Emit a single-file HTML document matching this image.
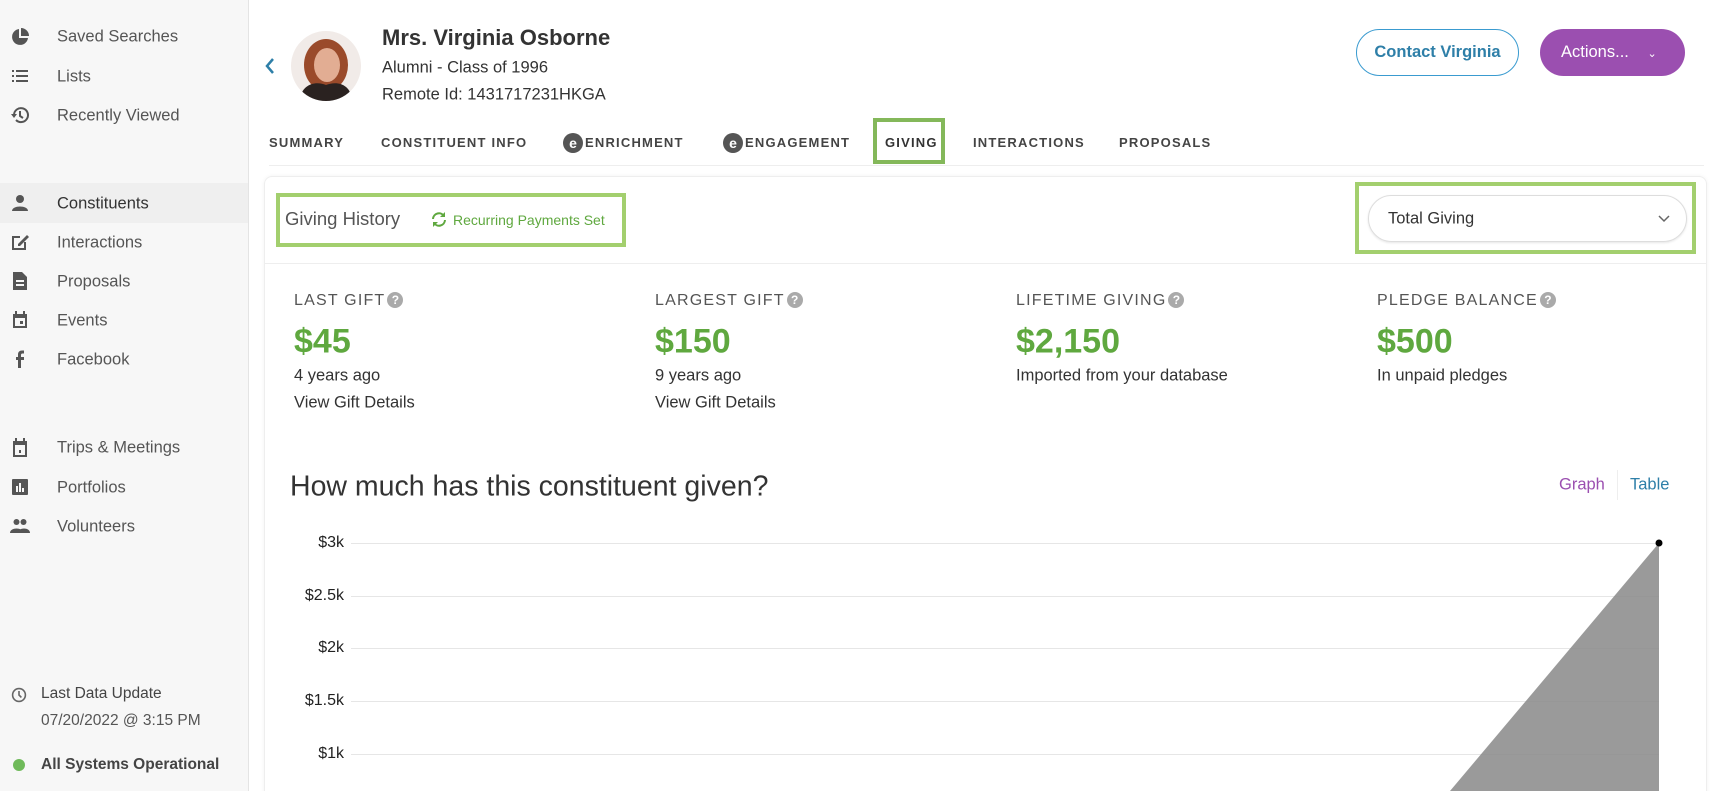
<!DOCTYPE html>
<html style="overflow:hidden;width:1720px;height:791px"><head><meta charset="utf-8"><style>
*{box-sizing:border-box;margin:0;padding:0}
body{width:1720px;height:791px;overflow:hidden;background:#fff;font-family:"Liberation Sans",sans-serif;color:#333;position:relative}
.a{position:absolute;white-space:nowrap}
.side{position:absolute;left:0;top:0;width:249px;height:791px;background:#f7f7f7;border-right:1px solid #e4e4e4}
.si{position:absolute;left:57px;font-size:16.5px;color:#555;transform:translateY(-50%)}
.ic{position:absolute;left:10px;width:20px;height:20px;transform:translateY(-50%);fill:#555}
.tab{position:absolute;top:143px;transform:translateY(-50%);font-size:13px;font-weight:bold;letter-spacing:1.2px;color:#444;display:flex;align-items:center;line-height:20px}
.e{display:inline-block;width:20px;height:20px;border-radius:50%;background:#555;color:#fff;font-size:14px;text-align:center;line-height:20px;margin-right:2px;letter-spacing:0}
.lbl{position:absolute;top:301px;transform:translateY(-50%);font-size:16px;letter-spacing:1.2px;color:#555}
.q{display:inline-block;width:16px;height:16px;border-radius:50%;background:#aaa;color:#fff;font-size:12px;text-align:center;line-height:16px;font-weight:bold;letter-spacing:0;vertical-align:1px;margin-left:2px}
.amt{position:absolute;top:342px;transform:translateY(-50%);font-size:34px;font-weight:bold;color:#5fa83f}
.sub{position:absolute;transform:translateY(-50%);font-size:16.5px;color:#333}
.gl{position:absolute;left:351px;width:1308px;height:1px;background:#e6e6e6}
.yl{position:absolute;right:1376px;font-size:16px;color:#222;transform:translateY(-50%)}
</style></head><body>
<div class="side">
<div style="position:absolute;left:0;top:183px;width:248px;height:40px;background:#efefef"></div>
<svg class="ic" style="top:37px" viewBox="0 0 20 20"><path d="M9 2A8 8 0 1 0 18 11H9Z"/><path d="M11 1V9H19A8 8 0 0 0 11 1Z"/></svg>
<svg class="ic" style="top:76px" viewBox="0 0 20 20"><rect x="2" y="4" width="2" height="2"/><rect x="2" y="9" width="2" height="2"/><rect x="2" y="14" width="2" height="2"/><rect x="6" y="4" width="12" height="2"/><rect x="6" y="9" width="12" height="2"/><rect x="6" y="14" width="12" height="2"/></svg>
<svg class="ic" style="top:115px" viewBox="0 0 20 20"><path d="M4 10A7 7 0 1 1 6 15" fill="none" stroke="#555" stroke-width="2"/><path d="M1 9L4 13L7 9Z"/><path d="M10 6V11L13 13" fill="none" stroke="#555" stroke-width="2"/></svg>
<div class="si" style="top:37px">Saved Searches</div>
<div class="si" style="top:77px">Lists</div>
<div class="si" style="top:116px">Recently Viewed</div>
<svg class="ic" style="top:203px" viewBox="0 0 20 20"><circle cx="10" cy="6" r="4"/><path d="M2 18C2 12 18 12 18 18Z"/></svg>
<svg class="ic" style="top:242px" viewBox="0 0 20 20"><path d="M2 4H10V6H4V16H14V10H16V18H2Z"/><path d="M8 12L17 3L19 5L10 14H8Z"/></svg>
<svg class="ic" style="top:281px" viewBox="0 0 20 20"><path d="M3 1H12L17 6V19H3Z"/><rect x="6" y="9" width="8" height="2" fill="#f7f7f7"/><rect x="6" y="13" width="8" height="2" fill="#f7f7f7"/></svg>
<svg class="ic" style="top:320px" viewBox="0 0 20 20"><path d="M3 4H17V18H3Z"/><rect x="5" y="8" width="10" height="8" fill="#f7f7f7"/><rect x="10" y="11" width="3" height="3"/><rect x="5" y="1" width="2" height="4"/><rect x="13" y="1" width="2" height="4"/></svg>
<svg class="ic" style="top:359px" viewBox="0 0 20 20"><path d="M11 19V11H14V8H11V6C11 5 11.5 4.5 12.5 4.5H14V1.5H12C9.5 1.5 8 3 8 5.5V8H6V11H8V19Z"/></svg>
<div class="si" style="top:204px;color:#333">Constituents</div>
<div class="si" style="top:243px">Interactions</div>
<div class="si" style="top:282px">Proposals</div>
<div class="si" style="top:321px">Events</div>
<div class="si" style="top:360px">Facebook</div>
<svg class="ic" style="top:448px" viewBox="0 0 20 20"><path d="M3 3H17V19H3Z"/><rect x="5" y="7" width="10" height="10" fill="#f7f7f7"/><rect x="9" y="12" width="2" height="3"/><rect x="5" y="0" width="2" height="4"/><rect x="13" y="0" width="2" height="4"/></svg>
<svg class="ic" style="top:487px" viewBox="0 0 20 20"><rect x="2" y="2" width="16" height="16" rx="1"/><rect x="6" y="9" width="2" height="6" fill="#f7f7f7"/><rect x="9" y="6" width="2" height="9" fill="#f7f7f7"/><rect x="12" y="11" width="2" height="4" fill="#f7f7f7"/></svg>
<svg class="ic" style="top:526px" viewBox="0 0 20 20"><circle cx="6.5" cy="6" r="3"/><circle cx="13.5" cy="6" r="3"/><path d="M0 17C0 11 13 11 13 17Z"/><path d="M8 17C8 11 20 11 20 17Z"/></svg>
<div class="si" style="top:448px">Trips &amp; Meetings</div>
<div class="si" style="top:488px">Portfolios</div>
<div class="si" style="top:527px">Volunteers</div>
<svg class="ic" style="top:695px;left:11px;width:16px;height:16px" viewBox="0 0 20 20"><circle cx="10" cy="10" r="8" fill="none" stroke="#666" stroke-width="2"/><path d="M10 5V10L13 13" fill="none" stroke="#666" stroke-width="2"/></svg>
<div class="si" style="top:694px;left:41px;font-size:15.5px;color:#444">Last Data Update</div>
<div class="si" style="top:721px;left:41px;font-size:15.5px;color:#555">07/20/2022 @ 3:15 PM</div>
<div style="position:absolute;left:13px;top:759px;width:12px;height:12px;border-radius:50%;background:#6fba5a"></div>
<div class="si" style="top:765px;left:41px;font-size:15.5px;color:#444;font-weight:bold">All Systems Operational</div>
</div>

<svg class="a" style="left:264px;top:57px" width="12" height="18" viewBox="0 0 12 18"><path d="M9 2L3 9L9 16" fill="none" stroke="#2e7fa8" stroke-width="2.5"/></svg>
<svg class="a" style="left:291px;top:31px" width="70" height="70" viewBox="0 0 70 70"><defs><clipPath id="c"><circle cx="35" cy="35" r="35"/></clipPath></defs><g clip-path="url(#c)"><rect width="70" height="70" fill="#f1ebe8"/><ellipse cx="35" cy="34" rx="22" ry="26" fill="#9a4a2a"/><ellipse cx="36" cy="34" rx="13" ry="17" fill="#e2ad93"/><path d="M8 72C10 52 25 50 35 54C46 50 60 52 62 72Z" fill="#2a2220"/></g></svg>
<div class="a" style="left:382px;top:38px;transform:translateY(-50%);font-size:22px;font-weight:bold;color:#333">Mrs. Virginia Osborne</div>
<div class="a" style="left:382px;top:68px;transform:translateY(-50%);font-size:16.5px;color:#333">Alumni - Class of 1996</div>
<div class="a" style="left:382px;top:95px;transform:translateY(-50%);font-size:16.5px;color:#333">Remote Id: 1431717231HKGA</div>
<div class="a" style="left:1356px;top:29px;width:163px;height:47px;border:1.5px solid #3a9bd0;border-radius:24px;text-align:center;line-height:44px;font-size:16.5px;color:#2e7fa8;font-weight:bold">Contact Virginia</div>
<div class="a" style="left:1540px;top:29px;width:145px;height:47px;background:#9b4fb0;border-radius:24px;color:#fff;font-size:16.5px;line-height:47px;padding-left:21px">Actions... <span style="font-size:11px;margin-left:14px">&#8964;</span></div>

<div class="tab" style="left:269px">SUMMARY</div>
<div class="tab" style="left:381px">CONSTITUENT INFO</div>
<div class="tab" style="left:563px"><span class="e">e</span>ENRICHMENT</div>
<div class="tab" style="left:723px"><span class="e">e</span>ENGAGEMENT</div>
<div class="a" style="left:873px;top:118px;width:72px;height:46px;border:4px solid #84b85a"></div>
<div class="tab" style="left:885px;color:#333">GIVING</div>
<div class="tab" style="left:973px">INTERACTIONS</div>
<div class="tab" style="left:1119px">PROPOSALS</div>
<div class="a" style="left:269px;top:165px;width:1435px;height:1px;background:#eee"></div>

<div class="a" style="left:264px;top:176px;width:1443px;height:630px;border:1px solid #eee;border-radius:8px;box-shadow:0 0 4px rgba(0,0,0,.05)"></div>
<div class="a" style="left:265px;top:263px;width:1441px;height:1px;background:#eee"></div>
<div class="a" style="left:276px;top:193px;width:350px;height:54px;border:4px solid #a3cf6e"></div>
<div class="a" style="left:285px;top:219px;transform:translateY(-50%);font-size:18.5px;color:#555">Giving History</div>
<svg class="a" style="left:430px;top:211px" width="18" height="17" viewBox="0 0 18 17"><path d="M3 8A6 6 0 0 1 14 5M15 9A6 6 0 0 1 4 12" fill="none" stroke="#5fa83f" stroke-width="2"/><path d="M15 1V6H10Z" fill="#5fa83f"/><path d="M3 16V11H8Z" fill="#5fa83f"/></svg>
<div class="a" style="left:453px;top:220px;transform:translateY(-50%);font-size:14px;color:#5fa83f">Recurring Payments Set</div>
<div class="a" style="left:1355px;top:182px;width:341px;height:72px;border:4px solid #a3cf6e"></div>
<div class="a" style="left:1368px;top:195px;width:319px;height:47px;border:1px solid #ddd;border-radius:24px;box-shadow:0 1px 2px rgba(0,0,0,.1)"></div>
<div class="a" style="left:1388px;top:219px;transform:translateY(-50%);font-size:16.5px;color:#333">Total Giving</div>
<svg class="a" style="left:1658px;top:215px" width="12" height="8" viewBox="0 0 12 8"><path d="M1 1L6 6L11 1" fill="none" stroke="#666" stroke-width="1.5"/></svg>

<div class="lbl" style="left:294px">LAST GIFT<span class="q">?</span></div>
<div class="lbl" style="left:655px">LARGEST GIFT<span class="q">?</span></div>
<div class="lbl" style="left:1016px">LIFETIME GIVING<span class="q">?</span></div>
<div class="lbl" style="left:1377px">PLEDGE BALANCE<span class="q">?</span></div>
<div class="amt" style="left:294px">$45</div>
<div class="amt" style="left:655px">$150</div>
<div class="amt" style="left:1016px">$2,150</div>
<div class="amt" style="left:1377px">$500</div>
<div class="sub" style="left:294px;top:376px">4 years ago</div>
<div class="sub" style="left:294px;top:403px">View Gift Details</div>
<div class="sub" style="left:655px;top:376px">9 years ago</div>
<div class="sub" style="left:655px;top:403px">View Gift Details</div>
<div class="sub" style="left:1016px;top:376px">Imported from your database</div>
<div class="sub" style="left:1377px;top:376px">In unpaid pledges</div>

<div class="a" style="left:290px;top:487px;transform:translateY(-50%);font-size:28.5px;color:#333">How much has this constituent given?</div>
<div class="a" style="left:1559px;top:485px;transform:translateY(-50%);font-size:16.5px;color:#9b4fb0">Graph</div>
<div class="a" style="left:1617px;top:470px;width:1px;height:30px;background:#eee"></div>
<div class="a" style="left:1630px;top:485px;transform:translateY(-50%);font-size:16.5px;color:#2e7fa8">Table</div>

<div class="gl" style="top:543px"></div><div class="gl" style="top:596px"></div><div class="gl" style="top:648px"></div><div class="gl" style="top:701px"></div><div class="gl" style="top:754px"></div>
<div class="yl" style="top:543px">$3k</div><div class="yl" style="top:596px">$2.5k</div><div class="yl" style="top:648px">$2k</div><div class="yl" style="top:701px">$1.5k</div><div class="yl" style="top:754px">$1k</div>
<svg class="a" style="left:0;top:0" width="1720" height="791"><path d="M1659 543L1450 791H1659Z" fill="#888" fill-opacity=".85"/><circle cx="1659" cy="543" r="3.5" fill="#000"/></svg>
</body></html>
